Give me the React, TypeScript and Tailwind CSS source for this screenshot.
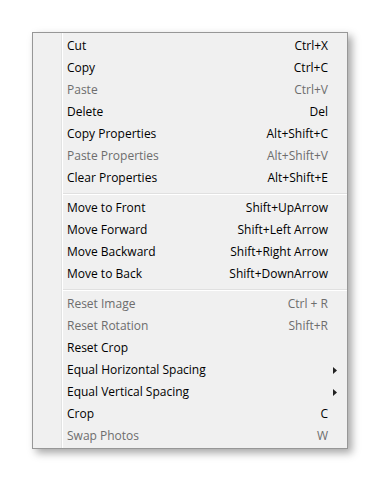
import React from 'react'

type Item = { label: string; keys?: string; disabled?: boolean; sub?: boolean }

const groups: Item[][] = [
  [
    { label: 'Cut', keys: 'Ctrl+X' },
    { label: 'Copy', keys: 'Ctrl+C' },
    { label: 'Paste', keys: 'Ctrl+V', disabled: true },
    { label: 'Delete', keys: 'Del' },
    { label: 'Copy Properties', keys: 'Alt+Shift+C' },
    { label: 'Paste Properties', keys: 'Alt+Shift+V', disabled: true },
    { label: 'Clear Properties', keys: 'Alt+Shift+E' },
  ],
  [
    { label: 'Move to Front', keys: 'Shift+UpArrow' },
    { label: 'Move Forward', keys: 'Shift+Left Arrow' },
    { label: 'Move Backward', keys: 'Shift+Right Arrow' },
    { label: 'Move to Back', keys: 'Shift+DownArrow' },
  ],
  [
    { label: 'Reset Image', keys: 'Ctrl + R', disabled: true },
    { label: 'Reset Rotation', keys: 'Shift+R', disabled: true },
    { label: 'Reset Crop' },
    { label: 'Equal Horizontal Spacing', sub: true },
    { label: 'Equal Vertical Spacing', sub: true },
    { label: 'Crop', keys: 'C' },
    { label: 'Swap Photos', keys: 'W', disabled: true },
  ],
]

const Row = ({ item }: { item: Item }) => (
  <div
    className={`flex h-[22px] items-center pl-[34px] pr-[19px] ${
      item.disabled ? 'text-[#6d6d6d]' : 'text-black'
    }`}
  >
    <span className="flex-1">{item.label}</span>
    {item.keys && <span>{item.keys}</span>}
    {item.sub && (
      <svg width="4" height="7" viewBox="0 0 4 7" className="mr-[-9px]">
        <path d="M0 0 L4 3.5 L0 7 Z" fill="#222" />
      </svg>
    )}
  </div>
)

const App = () => {
  return (
    <div className="h-[482px] w-[380px] bg-white pl-[32px] pt-[32px]">
      <div
        className="relative w-[316px] border border-[#979797] bg-[#f0f0f0] pb-[1px] pt-[2px] text-[12px] shadow-[4px_4px_8px_rgba(0,0,0,0.35)]"
        style={{ fontFamily: '"Open Sans", sans-serif' }}
      >
        <div className="absolute bottom-0 left-[28px] top-0 w-[2px] border-l border-[#e2e3e3] bg-white" />
        <div className="relative">
          {groups.map((g, i) => (
            <div key={i}>
              {i > 0 && (
                <div className="ml-[30px] pb-[2px] pt-[4px]">
                  <div className="h-[2px] border-t border-[#e0e0e0] bg-white" />
                </div>
              )}
              {g.map((item) => (
                <Row key={item.label} item={item} />
              ))}
            </div>
          ))}
        </div>
      </div>
    </div>
  )
}

export default App
